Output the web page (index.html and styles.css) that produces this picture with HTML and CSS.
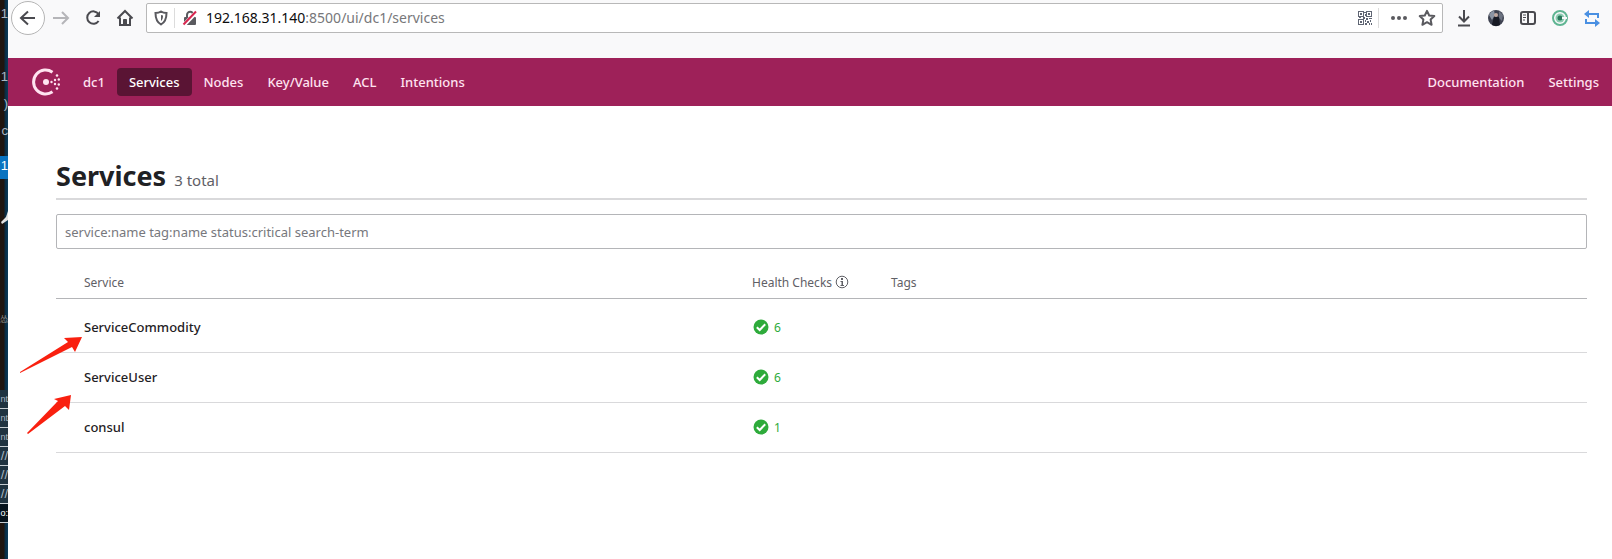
FILE: index.html
```
<!DOCTYPE html>
<html lang="en">

<head>
    <meta charset="UTF-8">
    <meta name="viewport" content="width=device-width, initial-scale=1.0">
    <title>Services - Consul</title>
    <link rel="stylesheet" href="styles.css">
</head>

<body>
    <!-- Editor window behind the browser -->
    <aside class="editor">
        <span class="line">1</span>
        <span class="line gap">1</span>
        <span class="line">)</span>
        <span class="line">c</span>
        <span class="line active">1</span>
        <svg class="tool" viewBox="0 0 8 14"><path d="M8 0L6 6L1 11L2 13L8 9Z" fill="#e4e4e4"/></svg>
        <span class="line faint">怂</span>
        <div class="links">
            <span>nt</span>
            <span>nt</span>
            <span>nt</span>
            <span class="slashes">//</span>
            <span class="slashes">//</span>
            <span class="slashes">//</span>
            <span class="white">o:</span>
        </div>
    </aside>

    <div class="browser">
        <div class="toolbar">
            <button class="tool-btn back" aria-label="Back">
                <svg width="18" height="18" viewBox="0 0 18 18"><path d="M16 9H2M9 2.500L2 9L9 15.500"/></svg>
            </button>
            <button class="tool-btn forward" aria-label="Forward">
                <svg width="18" height="18" viewBox="0 0 18 18"><path d="M1 9H16M10 3L16 9L10 15"/></svg>
            </button>
            <button class="tool-btn" aria-label="Reload">
                <svg width="18" height="18" viewBox="0 0 18 18"><path d="M14.500 5A6.200 6.200 0 1 0 14.600 12"/><path d="M16 2V8H10Z" fill="#4a4a4f" stroke="none"/></svg>
            </button>
            <button class="tool-btn" aria-label="Home">
                <svg width="18" height="18" viewBox="0 0 18 18"><path d="M1.500 9.500L9 2L16.500 9.500M4 8.500V16H14V8.500"/><path d="M7.500 16V10.500H10.500V16Z" fill="#4a4a4f" stroke-width="1"/></svg>
            </button>
            <div class="url-bar">
                <svg class="shield" width="14" height="16" viewBox="0 0 14 16"><path d="M7 1.500C5.500 2.500 3.500 3 1.500 3C1.500 8 2.500 12 7 14.500C11.500 12 12.500 8 12.500 3C10.500 3 8.500 2.500 7 1.500Z" fill="none" stroke="#5a5a5f" stroke-width="2"/><path d="M7 5V11C8.500 10 9 8 9 5.500Z" fill="#5a5a5f"/></svg>
                <span class="url-split"></span>
                <svg width="16" height="16" viewBox="0 0 16 16"><path d="M5 8V5A3.200 3.200 0 0 1 11.400 5V8" fill="none" stroke="#5a5a5f" stroke-width="2"/><rect x="2" y="7" width="12" height="8" rx="1" fill="#5a5a5f"/><path d="M1.500 15.500L15 1.500" stroke="#fff" stroke-width="4"/><path d="M1.500 14.500L14 1.500" stroke="#d7264f" stroke-width="2"/></svg>
                <span class="url"><b>192.168.31.140</b>:8500/ui/dc1/services</span>
                <svg class="qr" width="14" height="14" viewBox="0 0 14 14" fill="#5f6573"><path fill-rule="evenodd" d="M0 0H6V6H0ZM1 1V5H5V1ZM8 0H14V6H8ZM9 1V5H13V1ZM0 8H6V14H0ZM1 9V13H5V9Z"/><path d="M2 2H4V4H2ZM10 2H12V4H10ZM2 10H4V12H2ZM6 1H8V2H6ZM7 3H8V5H7ZM1 6H3V7H1ZM5 6H7V8H5ZM8 7H10V9H8ZM11 7H14V8H11ZM7 9H8V11H7ZM9 10H11V12H9ZM12 9H13V11H12ZM7 12H9V14H7ZM11 12H12V14H11ZM13 12H14V14H13Z"/></svg>
                <span class="url-split"></span>
                <svg class="dots" width="18" height="6" viewBox="0 0 18 6" fill="#5a5a5f"><circle cx="3" cy="3" r="2"/><circle cx="9" cy="3" r="2"/><circle cx="15" cy="3" r="2"/></svg>
                <svg class="star" width="18" height="18" viewBox="0 0 18 18"><path d="M9 1.800L11.200 6.500L16.300 7.100L12.600 10.600L13.600 15.800L9 13.200L4.400 15.800L5.400 10.600L1.700 7.100L6.800 6.500Z" fill="none" stroke="#5a5a5f" stroke-width="2" stroke-linejoin="round"/></svg>
            </div>
            <button class="tool-btn" aria-label="Downloads">
                <svg width="18" height="18" viewBox="0 0 18 18"><path d="M9 1V12M4 7.500L9 12.500L14 7.500M3 16.500H15"/></svg>
            </button>
            <button class="tool-btn" aria-label="Account">
                <svg width="18" height="18" viewBox="0 0 18 18"><circle cx="9" cy="9" r="8" fill="#3e4250" stroke="none"/><path d="M2 6A8 8 0 0 1 7 1.500L8 6L5 11Z" fill="#8b94a3" stroke="none"/><path d="M12 2L16 6L15 12L12 9Z" fill="#6c7381" stroke="none"/><circle cx="9" cy="6" r="2" fill="#c2a9a0" stroke="none"/><path d="M5 15L7 8H12L13 16A8 8 0 0 1 5 16Z" fill="#171a24" stroke="none"/></svg>
            </button>
            <button class="tool-btn" aria-label="Sidebars">
                <svg width="18" height="18" viewBox="0 0 18 18"><rect x="2" y="3" width="14" height="12" rx="2"/><path d="M9 3V15"/><path d="M4 6H7M4 8.500H7M4 11H6" stroke-width="1"/></svg>
            </button>
            <button class="tool-btn" aria-label="Extension">
                <svg width="18" height="18" viewBox="0 0 18 18"><circle cx="9" cy="9" r="7" stroke="#5fb592"/><circle cx="9" cy="9" r="4.500" fill="#8bcbb0" stroke="none"/><circle cx="9" cy="9" r="2.500" fill="#28785a" stroke="none"/><path d="M11 9H16" stroke="#f9f9fa"/></svg>
            </button>
            <button class="tool-btn" aria-label="Sync tabs">
                <svg width="18" height="18" viewBox="0 0 18 18" class="blue"><path d="M4 5H15V9M14 14H3V10"/><path d="M6 1V9L1 5ZM12 10V18L17 14Z" fill="#4a90e2" stroke="none"/></svg>
            </button>
        </div>

        <header class="navbar">
            <a href="#" class="logo" aria-label="Consul">
                <svg width="29" height="28" viewBox="0 0 29 28" fill="#ffe3f0"><path d="M20.500 4.200A12 12 0 1 0 20.500 23.800" fill="none" stroke="#ffe3f0" stroke-width="3"/><circle cx="14" cy="14" r="3"/><circle cx="19.500" cy="14" r="1.200"/><circle cx="23" cy="12" r="1.200"/><circle cx="23" cy="16" r="1.200"/><circle cx="26.800" cy="11.500" r="1.200"/><circle cx="26.800" cy="16.500" r="1.200"/><circle cx="25" cy="7.500" r="1.300"/><circle cx="25" cy="20.500" r="1.300"/></svg>
            </a>
            <nav class="menu">
                <a href="#">dc1</a>
                <a href="#" class="selected">Services</a>
                <a href="#">Nodes</a>
                <a href="#">Key/Value</a>
                <a href="#">ACL</a>
                <a href="#">Intentions</a>
            </nav>
            <nav class="menu menu-right">
                <a href="#">Documentation</a>
                <a href="#">Settings</a>
            </nav>
        </header>

        <main class="content">
            <div class="title">
                <h1>Services</h1>
                <span class="total">3 total</span>
            </div>
            <input type="text" class="search" aria-label="Search services" placeholder="service:name tag:name status:critical search-term">
            <table class="services">
                <thead>
                    <tr>
                        <th class="name">Service</th>
                        <th class="health">
                            <span class="health-label">Health Checks
                                <svg width="14" height="14" viewBox="0 0 14 14"><circle cx="7" cy="7" r="5.800" fill="none" stroke="#5f6066"/><path d="M6 3H8V5H6ZM5.500 6H8V10H9V11H5.500V10H6.500V7H5.500Z" fill="#5f6066"/></svg>
                            </span>
                        </th>
                        <th>Tags</th>
                    </tr>
                </thead>
                <tbody>
                    <tr>
                        <td class="name"><a href="#">ServiceCommodity</a></td>
                        <td><span class="passing"><svg width="16" height="16" viewBox="0 0 16 16"><circle cx="8" cy="8" r="7.500" fill="#2eab3b"/><path d="M3.800 8.300L6.700 11L12.200 5.300" fill="none" stroke="#fff" stroke-width="2"/></svg>6</span></td>
                        <td></td>
                    </tr>
                    <tr>
                        <td class="name"><a href="#">ServiceUser</a></td>
                        <td><span class="passing"><svg width="16" height="16" viewBox="0 0 16 16"><circle cx="8" cy="8" r="7.500" fill="#2eab3b"/><path d="M3.800 8.300L6.700 11L12.200 5.300" fill="none" stroke="#fff" stroke-width="2"/></svg>6</span></td>
                        <td></td>
                    </tr>
                    <tr>
                        <td class="name"><a href="#">consul</a></td>
                        <td><span class="passing"><svg width="16" height="16" viewBox="0 0 16 16"><circle cx="8" cy="8" r="7.500" fill="#2eab3b"/><path d="M3.800 8.300L6.700 11L12.200 5.300" fill="none" stroke="#fff" stroke-width="2"/></svg>1</span></td>
                        <td></td>
                    </tr>
                </tbody>
            </table>
        </main>
    </div>

    <!-- Arrows drawn over the page -->
    <svg class="arrows" width="100" height="110" viewBox="0 330 100 110" fill="#f9200f">
        <path d="M20 372L68 342L64 338L82 337L75 352L72 347L20 373Z"/>
        <path d="M27 433L58 401L54 399L71 395L69 410L65 406L28 434Z"/>
    </svg>
</body>

</html>
```

FILE: styles.css
```
* {
    box-sizing: border-box;
}

body {
    margin: 0;
    display: flex;
    min-height: 100vh;
    background-color: #ffffff;
    font-family: 'Noto Sans', sans-serif;
    font-size: 13px;
    color: #1f2124;
    position: relative;
}

a {
    color: inherit;
    text-decoration: none;
}

/* Editor strip */
.editor {
    width: 8px;
    flex-shrink: 0;
    display: flex;
    flex-direction: column;
    background: linear-gradient(to right, #20150f 4px, #0a2a40 5px, #0b3a58);
    color: #a9b8c4;
    font-family: 'Liberation Sans', sans-serif;
    font-size: 13px;
    text-align: right;
}

.line {
    height: 27px;
    line-height: 27px;
}

.line.gap {
    margin-top: 36px;
}

.line.active {
    height: 23px;
    line-height: 20px;
    margin-top: 12px;
    background-color: #0a73c0;
    color: #ffffff;
}

.tool {
    width: 8px;
    height: 14px;
    margin-top: 32px;
}

.line.faint {
    margin-top: 80px;
    color: #8a8a8a;
    font-family: 'Noto Sans CJK SC', sans-serif;
    font-size: 8px;
}

.links {
    margin-top: 58px;
    background-color: #1f3340;
    font-size: 9px;
}

.links span {
    display: block;
    height: 19px;
    line-height: 18px;
    border-bottom: 1px solid #c4ccd1;
}

.links .slashes {
    font-size: 13px;
}

.links .white {
    color: #ffffff;
    background-color: #06131d;
}

/* Browser */
.browser {
    flex: 1;
    min-width: 0;
}

.toolbar {
    display: flex;
    align-items: flex-start;
    height: 58px;
    padding: 1px 4px 0 3px;
    background-color: #f9f9fa;
}

.tool-btn {
    display: flex;
    justify-content: center;
    align-items: center;
    width: 32px;
    height: 34px;
    padding: 0;
    border: none;
    background: none;
    flex-shrink: 0;
    cursor: pointer;
}

.tool-btn svg {
    fill: none;
    stroke: #4a4a4f;
    stroke-width: 2;
}

.tool-btn.back {
    width: 34px;
    border: 1px solid #b5b5b5;
    border-radius: 50%;
    background-color: #ffffff;
}

.tool-btn.forward svg {
    stroke: #b5b5b8;
}

.tool-btn .blue {
    stroke: #4a90e2;
}

.url-bar {
    flex: 1;
    display: flex;
    align-items: center;
    height: 30px;
    margin: 2px 5px 0;
    padding: 0 6px 0 7px;
    border: 1px solid #b8b8b8;
    border-radius: 2px;
    background-color: #ffffff;
}

.url-split {
    width: 1px;
    height: 20px;
    margin: 0 7px 0 6px;
    background-color: #dcdcdc;
}

.url {
    flex: 1;
    margin-left: 8px;
    padding-bottom: 1px;
    font-size: 14px;
    color: #77777a;
}

.url b {
    font-weight: 400;
    color: #0c0c0d;
}

.dots {
    margin: 0 10px 0 4px;
}

/* Navbar */
.navbar {
    display: flex;
    align-items: center;
    height: 48px;
    padding: 0 1px 0 24px;
    background-color: #9e2159;
    color: #ffe3f0;
}

.logo {
    display: flex;
    margin-right: 10px;
}

.menu {
    display: flex;
}

.menu a {
    padding: 0 12px;
    height: 28px;
    line-height: 29px;
    border-radius: 4px;
    font-weight: 500;
}

.menu .selected {
    background-color: #5a1434;
    color: #ffffff;
}

.menu-right {
    margin-left: auto;
}

/* Content */
.content {
    padding: 48px 25px 0 48px;
}

.title {
    display: flex;
    align-items: baseline;
    gap: 8px;
    height: 46px;
    border-bottom: 2px solid #d9d9db;
}

h1 {
    margin: 0;
    font-size: 27px;
    line-height: 44px;
}

.total {
    font-size: 15px;
    color: #5f6066;
}

.search {
    display: block;
    width: 100%;
    height: 35px;
    margin-top: 14px;
    padding: 0 8px;
    border: 1px solid #b4b5b8;
    border-radius: 2px;
    font-family: inherit;
    font-size: 13px;
}

.search::placeholder {
    color: #77787d;
}

.services {
    width: 100%;
    margin-top: 18px;
    border-collapse: collapse;
    table-layout: fixed;
}

.services th {
    height: 31px;
    padding: 0;
    border-bottom: 1px solid #b4b5b8;
    font-size: 12px;
    font-weight: 400;
    text-align: left;
    color: #5f6066;
}

.services td {
    height: 50px;
    padding: 0;
    border-bottom: 1px solid #d9d9db;
}

.services tbody tr:first-child td {
    height: 54px;
    padding-top: 4px;
}

.services .name {
    padding-left: 28px;
    font-weight: 500;
}

.services th.name {
    font-weight: 400;
}

.services .health {
    width: 139px;
}

.health-label {
    display: flex;
    align-items: center;
    gap: 3px;
}

.passing {
    display: flex;
    align-items: center;
    gap: 5px;
    padding-left: 1px;
    font-size: 12px;
    color: #2eab3b;
}

.arrows {
    position: absolute;
    left: 0;
    top: 330px;
    pointer-events: none;
}
```
